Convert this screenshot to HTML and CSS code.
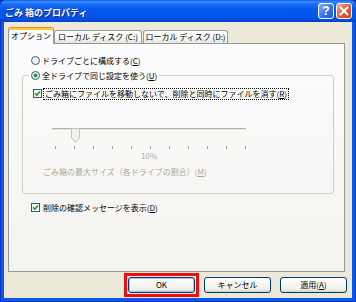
FILE: index.html
```html
<!DOCTYPE html>
<html lang="ja">
<head>
    <meta charset="UTF-8">
    <meta name="viewport" content="width=device-width, initial-scale=1.0">
    <title>ごみ箱のプロパティ</title>
    <link rel="stylesheet" href="styles.css">
</head>
<body>
    <div class="window">
        <div class="titlebar">
            <span class="title">ごみ 箱のプロパティ</span>
            <div class="caption-buttons">
                <span class="cap-btn help">?</span>
                <span class="cap-btn close">
                    <svg width="14" height="14" viewBox="0 0 14 14"><path d="M3.5 3.5 L10.5 10.5 M10.5 3.5 L3.5 10.5" stroke="#fff" stroke-width="2" stroke-linecap="square"/></svg>
                </span>
            </div>
        </div>

        <div class="client">
            <div class="tabs">
                <div class="tab active">オプション</div>
                <div class="tab tab-c">ローカル ディスク (C:)</div>
                <div class="tab tab-d">ローカル ディスク (D:)</div>
            </div>

            <div class="panel">
                <div class="option">
                    <svg class="radio" width="9" height="9" viewBox="0 0 9 9"><circle cx="4.5" cy="4.5" r="4" fill="#f4f4f0" stroke="#2c5b8f"/></svg>
                    <span>ドライブごとに構成する(<u>C</u>)</span>
                </div>

                <fieldset class="group">
                    <legend class="option">
                        <svg class="radio" width="9" height="9" viewBox="0 0 9 9"><circle cx="4.5" cy="4.5" r="4" fill="#f4f4f0" stroke="#2c5b8f"/><circle cx="4.5" cy="4.5" r="2" fill="#2a9a2a"/></svg>
                        <span>全ドライブで同じ設定を使う(<u>U</u>)</span>
                    </legend>
                    <div class="group-body">
                        <div class="option check-row">
                            <svg class="check" width="9" height="9" viewBox="0 0 9 9"><rect x="0.5" y="0.5" width="8" height="8" fill="#f6f6f2" stroke="#2c5b8f"/><path d="M2 4.2 L3.8 6.2 L7 2.4" fill="none" stroke="#21a121" stroke-width="1.6"/></svg>
                            <span class="focus">ごみ箱にファイルを移動しないで、削除と同時にファイルを消す(<u>R</u>)</span>
                        </div>

                        <div class="slider">
                            <div class="track"></div>
                            <svg class="thumb" width="9" height="15" viewBox="0 0 9 15"><path d="M0.5 0.5 H8.5 V10 L4.5 14.5 L0.5 10 Z" fill="#f2f1eb" stroke="#c6c4b8"/></svg>
                        </div>
                        <div class="ticks">
                            <i></i><i></i><i></i><i></i><i></i><i></i><i></i><i></i><i></i><i></i><i></i>
                        </div>
                        <div class="slider-value">10%</div>
                        <div class="disabled-label">ごみ箱の最大サイズ（各ドライブの割合）(<u>M</u>)</div>
                    </div>
                </fieldset>

                <div class="option confirm-row">
                    <svg class="check" width="9" height="9" viewBox="0 0 9 9"><rect x="0.5" y="0.5" width="8" height="8" fill="#f6f6f2" stroke="#2c5b8f"/><path d="M2 4.2 L3.8 6.2 L7 2.4" fill="none" stroke="#21a121" stroke-width="1.6"/></svg>
                    <span>削除の確認メッセージを表示(<u>D</u>)</span>
                </div>
            </div>

            <div class="buttons">
                <span class="marker"><button class="btn default">OK</button></span>
                <button class="btn">キャンセル</button>
                <button class="btn">適用(<u>A</u>)</button>
            </div>
        </div>
    </div>
</body>
</html>
```

FILE: styles.css
```css
body {
    margin: 0;
    padding: 0;
    background: #fff;
    font-family: "Noto Sans CJK JP", "Liberation Sans", sans-serif;
    font-size: 8px;
    color: #000;
}

.window {
    width: 356px;
    height: 302px;
    box-sizing: border-box;
    display: flex;
    flex-direction: column;
    background: #0833c4;
    padding: 0 1px 1px;
}

/* title bar */

.titlebar {
    height: 22px;
    margin: 0 -1px;
    display: flex;
    align-items: center;
    justify-content: space-between;
    padding: 2px 4px 0 5px;
    box-sizing: border-box;
    background: linear-gradient(to bottom, #0a5fef 0px, #3d8bf9 2px, #1c6ff4 4px, #0558ec 9px, #0155ea 16px, #014ddd 20px, #0140c8 22px);
    border-radius: 6px 6px 0 0;
}

.title {
    color: #fff;
    font-weight: bold;
    font-size: 9px;
    text-shadow: 1px 1px 0 #0f1e89;
}

.caption-buttons {
    display: flex;
    gap: 2px;
    margin-top: -2px;
}

.cap-btn {
    width: 16px;
    height: 16px;
    box-sizing: border-box;
    border: 1px solid #fff;
    border-radius: 3px;
    display: flex;
    align-items: center;
    justify-content: center;
    color: #fff;
}

.cap-btn.help {
    background: linear-gradient(135deg, #8ab0f8, #3a72e8 55%, #2458d6);
    font-family: "Liberation Sans", sans-serif;
    font-weight: bold;
    font-size: 12px;
    line-height: 14px;
}

.cap-btn.close {
    background: linear-gradient(135deg, #f3a689, #e0623a 50%, #c8401a);
}

/* client area */

.client {
    flex: 1;
    background: #ece9d8;
    border: solid #0a58e8;
    border-width: 0 3px 3px;
    padding: 5px 0 1px;
    display: flex;
    flex-direction: column;
}

.tabs {
    display: flex;
    align-items: flex-end;
    padding-left: 4px;
    margin-bottom: -1px;
    position: relative;
    z-index: 1;
}

.tab {
    box-sizing: border-box;
    height: 13px;
    margin-bottom: 1px;
    border: 1px solid #919b9c;
    border-bottom: none;
    border-radius: 3px 3px 0 0;
    background: linear-gradient(#ffffff, #f3f3ef 70%, #e5e4dc);
    line-height: 12px;
    text-align: center;
    white-space: nowrap;
}

.tab.active {
    width: 46px;
    height: 17px;
    margin-bottom: 0;
    border-top-color: #e68b2c;
    background: #fcfcfe;
    box-shadow: inset 0 2px 0 #ffc73c;
    line-height: 16px;
}

.tab-c {
    width: 88px;
}

.tab-d {
    width: 85px;
    margin-left: 1px;
}

.panel {
    width: 337px;
    height: 229px;
    box-sizing: border-box;
    margin-left: 4px;
    border: 1px solid #919b9c;
    background: linear-gradient(#fcfcfe, #f4f3ee);
    padding: 9px 10px 0 22px;
}

.option {
    display: flex;
    align-items: center;
    gap: 2px;
    height: 15px;
    white-space: nowrap;
}

.radio, .check {
    flex: none;
}

.group {
    margin: 0 0 0 -9px;
    padding: 0 0 15px;
    border: 1px solid #d0d0bf;
    border-radius: 3px;
}

.group legend {
    margin-left: 6px;
    padding: 0 2px;
}

.group-body {
    padding: 3px 0 0 10px;
}

.check-row {
    gap: 0;
}

.focus {
    line-height: 10px;
    border: 1px dotted #000;
    padding: 0 1px;
    margin-left: 1px;
}

.slider {
    position: relative;
    width: 194px;
    height: 15px;
    margin: 27px 0 0 19px;
}

.track {
    margin-top: 6px;
    height: 1px;
    border-top: 1px solid #b5b2a6;
    background: #e4e2d8;
    border-bottom: 1px solid #fff;
}

.thumb {
    position: absolute;
    left: 19px;
    top: 0;
}

.ticks {
    width: 191px;
    height: 3px;
    margin: 3px 0 0 22px;
    display: flex;
    justify-content: space-between;
}

.ticks i {
    width: 1px;
    height: 3px;
    background: #a8a697;
}

.slider-value {
    width: 194px;
    margin: 1px 0 0 19px;
    line-height: 12px;
    text-align: center;
    color: #aca899;
}

.disabled-label {
    margin: 4px 0 0 10px;
    line-height: 12px;
    color: #aca899;
    white-space: nowrap;
}

.confirm-row {
    margin-top: 6px;
    gap: 3px;
}

/* buttons */

.buttons {
    display: flex;
    justify-content: flex-end;
    align-items: center;
    gap: 9px;
    margin-top: 1px;
    padding-right: 5px;
}

.marker {
    display: flex;
    border: 3px solid #f20d0d;
    padding: 1px;
    margin-right: -4px;
}

.btn {
    width: 67px;
    height: 16px;
    padding: 0;
    font-family: inherit;
    font-size: 8px;
    line-height: 14px;
    color: #000;
    border: 1px solid #003c74;
    border-radius: 3px;
    background: linear-gradient(#ffffff, #f0f0ea 80%, #d6d0c5);
}

.btn.default {
    box-shadow: inset 0 0 0 1px #a9c4f0;
}
```
